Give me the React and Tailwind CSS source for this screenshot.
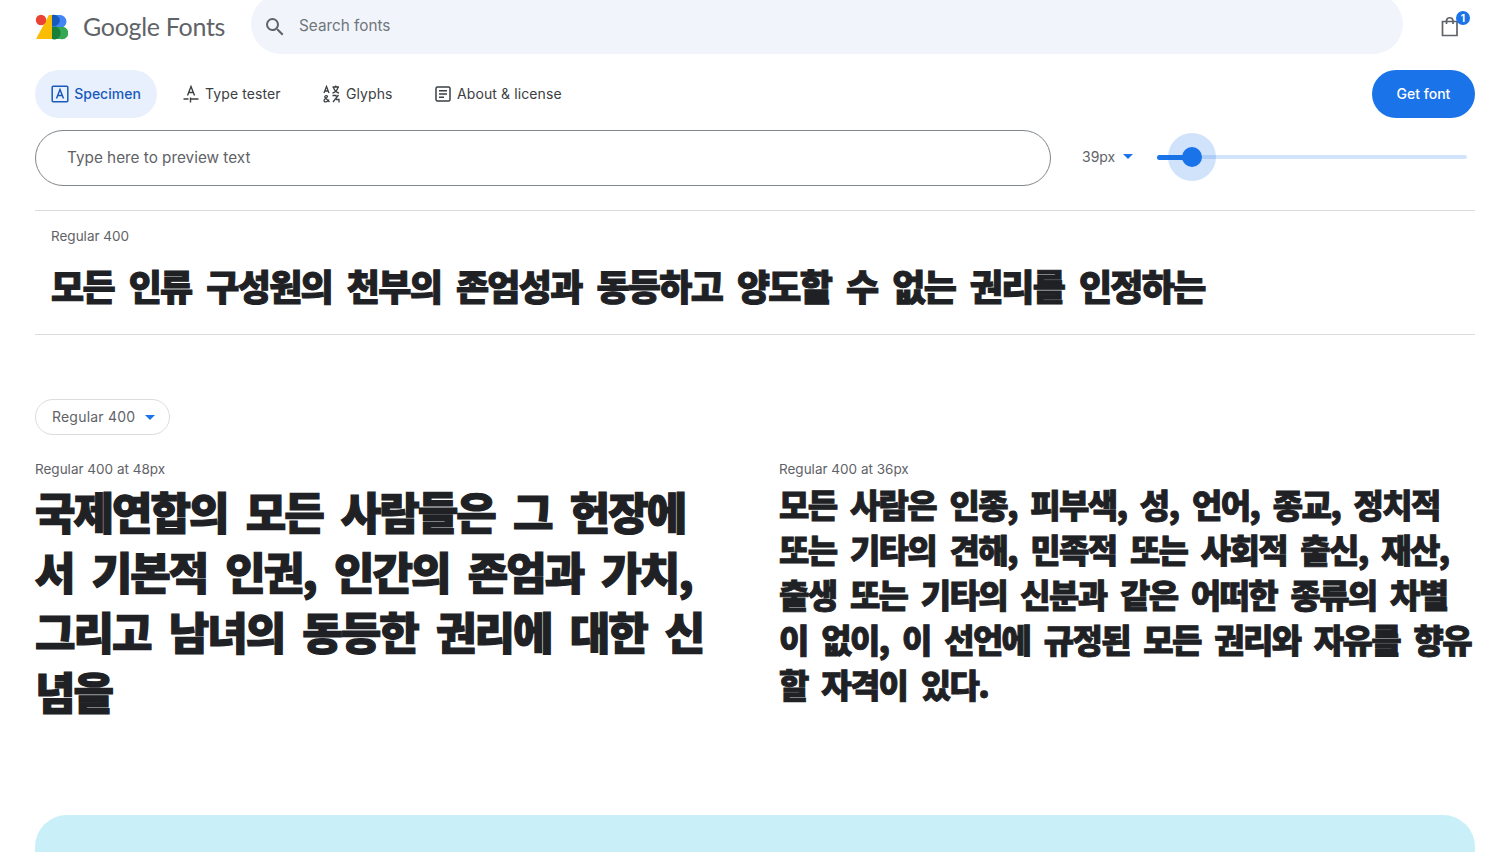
import React from 'react';

const Logo = () => (
  <svg width="33" height="26" viewBox="0 0 33 26" className="shrink-0 mt-[-1px]">
    <path d="M1 25 L14 1 H17 V25 Z" fill="#fbbc04" />
    <circle cx="6" cy="6" r="5.2" fill="#ea4335" />
    <path d="M17 1 H25 A6.5 6.5 0 0 1 25 14 H17 Z" fill="#4285f4" />
    <path d="M17 1 A6.5 6.5 0 0 1 25 6.5 A6.5 6.5 0 0 1 17 12 Z" fill="#185abc" />
    <path d="M17 13 H25.5 A6.2 6.2 0 1 1 25.5 25 H17 Z" fill="#34a853" />
    <path d="M17 13 A6.2 6.2 0 0 1 25.5 19 A6.2 6.2 0 0 1 17 25 Z" fill="#188038" />
  </svg>
);

const SearchIcon = () => (
  <svg width="24" height="24" viewBox="0 0 24 24" fill="#5f6368">
    <path d="M15.5 14h-.79l-.28-.27A6.47 6.47 0 0 0 16 9.5 6.5 6.5 0 1 0 9.5 16c1.61 0 3.09-.59 4.23-1.57l.27.28v.79l5 4.99L20.49 19l-4.99-5zm-6 0C7.01 14 5 11.99 5 9.5S7.01 5 9.5 5 14 7.01 14 9.5 11.99 14 9.5 14z" />
  </svg>
);

const SpecimenIcon = () => (
  <svg width="18" height="18" viewBox="0 0 18 18" fill="none" stroke="#185abc" strokeWidth="1.5">
    <rect x="1.2" y="1.2" width="15.6" height="15.6" rx="1" />
    <path d="M5.5 13.5 L9 4.5 L12.5 13.5 M6.7 10.5 H11.3" />
  </svg>
);

const TesterIcon = () => (
  <svg width="16" height="18" viewBox="0 0 16 18" fill="none" stroke="#3c4043" strokeWidth="1.4">
    <path d="M4.5 10.5 L8 1.5 L11.5 10.5 M5.7 7.5 H10.3" />
    <path d="M0.5 14 H5.5 M8 14 H15.5 M7.5 12.5 V17.5" />
  </svg>
);

const GlyphsIcon = () => (
  <svg width="17" height="18" viewBox="0 0 17 18" fill="none" stroke="#3c4043" strokeWidth="1.3">
    <path d="M1 8 L3.5 1.5 L6 8 M1.8 6 H5.2" />
    <path d="M9.5 2 H16 M12.7 0.5 V2 M10.5 2.5 C11.5 5.5 13.5 7.5 16 8 M15 2.5 C14 5.5 12 7.5 9.5 8" />
    <path d="M6.5 17 L2 12.5 C1 11 3.8 9.7 4.5 11.5 C4.8 12.8 1 13.5 1 15.5 C1 17.5 4.5 17.5 6 14.5" />
    <path d="M9.5 10.5 H13 V11.5 M15.5 10 L10 17 M13 14.5 H16 V17.5" />
  </svg>
);

const AboutIcon = () => (
  <svg width="16" height="16" viewBox="0 0 16 16" fill="none" stroke="#3c4043" strokeWidth="1.5">
    <rect x="1" y="1" width="14" height="14" rx="1.5" />
    <path d="M4 4.8 H12 M4 8 H12 M4 11.2 H9" />
  </svg>
);

const Caret = () => <span className="w-0 h-0 border-x-[5px] border-x-transparent border-t-[5px] border-t-[#1a73e8]" />;

const korean = 'font-["Noto_Sans_CJK_KR",sans-serif] font-black text-[#202124] [-webkit-text-stroke:0.028em_#202124] whitespace-nowrap [word-spacing:0.229em]';

const tabs = [
  { label: 'Type tester', icon: <TesterIcon />, w: 'w-[140px]' },
  { label: 'Glyphs', icon: <GlyphsIcon />, w: 'w-[112px]' },
  { label: 'About & license', icon: <AboutIcon />, w: 'w-[160px]' },
];

const leftLines = ['국제연합의 모든 사람들은 그 헌장에', '서 기본적 인권, 인간의 존엄과 가치,', '그리고 남녀의 동등한 권리에 대한 신', '념을'];
const rightLines = [
  '모든 사람은 인종, 피부색, 성, 언어, 종교, 정치적',
  '또는 기타의 견해, 민족적 또는 사회적 출신, 재산,',
  '출생 또는 기타의 신분과 같은 어떠한 종류의 차별',
  '이 없이, 이 선언에 규정된 모든 권리와 자유를 향유',
  '할 자격이 있다.',
];

export default function App() {
  return (
    <div className='font-["Inter",sans-serif] h-[852px] overflow-hidden bg-white pl-[35px] pr-[29px]'>
      {/* Top bar */}
      <header className="h-[54px] flex items-center">
        <div className="w-[216px] flex items-center gap-[15px]">
          <Logo />
          <span className='font-["Lato",sans-serif] text-[25px] tracking-[-0.3px] text-[#5f6368]'>Google Fonts</span>
        </div>
        <div className="flex-1 h-[60px] mt-[-6px] rounded-[32px] bg-[#f1f5fb] flex items-center pl-[12px] pt-[6px]">
          <SearchIcon />
          <span className="ml-[12px] mt-[-2px] text-[15.3px] text-[#70757a]">Search fonts</span>
        </div>
        <div className="w-[72px] flex justify-end pr-[16px]">
          <div className="relative w-[18px] h-[20px] mt-[-2px]">
            <svg width="18" height="21" viewBox="0 0 18 21" fill="none" stroke="#5f6368" strokeWidth="1.7">
              <path d="M1.5 5.5 H16 V19.5 H1.5 Z" />
              <path d="M5.5 8 V4.5 A3.3 3.3 0 0 1 12 4.5 V8" />
            </svg>
            <span className="absolute right-[-11px] top-[-5px] w-[14px] h-[14px] rounded-full bg-[#1a73e8] text-white text-[10px] font-bold leading-[14px] text-center">1</span>
          </div>
        </div>
      </header>

      {/* Tabs */}
      <nav className="mt-[16px] flex items-center h-[48px]">
        <div className="w-[122px] h-[48px] rounded-[24px] bg-[#e8f0fe] flex items-center justify-center gap-[5px] text-[14px] font-medium text-[#185abc]">
          <SpecimenIcon />
          <span className="mt-[-1px]">Specimen</span>
        </div>
        <div className="ml-[14px] flex">
          {tabs.map((t) => (
            <div key={t.label} className={`${t.w} flex items-center justify-start pl-[12px] gap-[6px] text-[14px] text-[#3c4043] tracking-[0.1px]`}>
              {t.icon}
              <span className="mt-[-1px]">{t.label}</span>
            </div>
          ))}
        </div>
        <button className="ml-auto w-[103px] h-[48px] pb-[1px] rounded-[24px] bg-[#1a73e8] text-white text-[14px] font-medium">Get font</button>
      </nav>

      {/* Preview input and size */}
      <div className="mt-[12px] flex items-center h-[56px]">
        <div className="w-[1016px] h-[56px] rounded-[28px] border border-[#80868b] flex items-center pl-[31px] text-[15.3px] text-[#5f6368]">
          Type here to preview text
        </div>
        <div className="ml-[31px] w-[75px] flex items-center gap-[8px] text-[14px] text-[#5f6368] mt-[-4px]">
          <span>39px</span>
          <Caret />
        </div>
        <div className="relative w-[310px] h-[4px] rounded-full bg-[#d2e3fc] mt-[-2px]">
          <div className="absolute left-0 top-[-0.5px] w-[35px] h-[5px] rounded-full bg-[#1a73e8]" />
          <div className="absolute left-[11px] top-[-22px] w-[48px] h-[48px] rounded-full bg-[#1a73e8]/20" />
          <div className="absolute left-[25px] top-[-8px] w-[20px] h-[20px] rounded-full bg-[#1a73e8]" />
        </div>
      </div>

      {/* Sample row */}
      <section className="mt-[24px] h-[125px] border-y border-[#dadce0] pl-[16px]">
        <p className="mt-[17px] text-[13.5px] leading-[16px] text-[#5f6368]">Regular 400</p>
        <p className={`${korean} mt-[12px] text-[36px] leading-[58px] tracking-[-0.047em]`}>
          모든 인류 구성원의 천부의 존엄성과 동등하고 양도할 수 없는 권리를 인정하는
        </p>
      </section>

      {/* Weight select */}
      <div className="mt-[64px] w-[135px] h-[36px] rounded-[18px] border border-[#dadce0] flex items-center pl-[16px] gap-[10px] text-[14px] tracking-[0.2px] text-[#5f6368]">
        <span className="mt-[-1px]">Regular 400</span>
        <Caret />
      </div>

      {/* Paragraphs */}
      <div className="mt-[26px] h-[354px] flex">
        <div className="w-[744px] shrink-0">
          <p className="text-[13.5px] leading-[16px] text-[#5f6368]">Regular 400 at 48px</p>
          <div className={`${korean} mt-[4px] text-[44px] leading-[60px] tracking-[-0.045em]`}>
            {leftLines.map((l) => <div key={l}>{l}</div>)}
          </div>
        </div>
        <div className="flex-1">
          <p className="text-[13.5px] leading-[16px] text-[#5f6368]">Regular 400 at 36px</p>
          <div className={`${korean} mt-[5px] text-[33px] leading-[45px] tracking-[-0.05em]`}>
            {rightLines.map((l) => <div key={l}>{l}</div>)}
          </div>
        </div>
      </div>

      {/* Next section peek */}
      <div className="h-[60px] rounded-t-[32px] bg-[#c9eff8]" />
    </div>
  );
}
